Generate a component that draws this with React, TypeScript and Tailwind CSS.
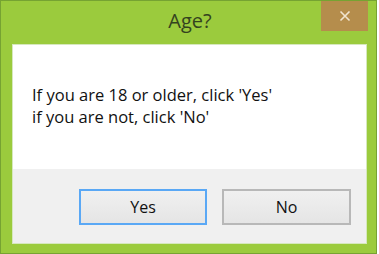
import React from "react";

export default function App() {
  return (
    <div className="w-[379px] h-[254px] bg-white relative overflow-hidden" style={{ fontFamily: '"Open Sans", "Noto Sans", sans-serif' }}>
      <div className="w-[377px] h-[254px] border border-[#76a332] bg-[#9bcb3d] flex flex-col pl-[11px] pr-[10px]">
        <div className="h-[43px] relative flex items-center justify-center">
          <span className="text-[20px] leading-none text-[#34431f] pb-[4px] pl-[2px]">Age?</span>
          <div className="absolute top-0 right-[-2px] w-[47px] h-[30px] bg-[#b58d4c] flex items-center justify-center">
            <svg width="12" height="12" viewBox="0 0 12 12">
              <path d="M1.5 1.5 L10.5 10.5 M10.5 1.5 L1.5 10.5" stroke="#f1e4cf" strokeWidth="1.6" />
            </svg>
          </div>
        </div>
        <div className="border border-[#d6e8bd] flex flex-col w-[355px]">
          <div className="bg-white h-[124px] pl-[19px] pt-[39px] text-[16.5px] leading-[22px] text-[#111111]">
            <div>If you are 18 or older, click 'Yes'</div>
            <div>if you are not, click 'No'</div>
          </div>
          <div className="bg-[#f0f0f0] h-[74px] flex justify-end items-start pt-[20px] pr-[15px] gap-[15px]">
            <button className="w-[128px] h-[36px] border-2 border-[#5aa8f5] bg-gradient-to-b from-[#f0f0f0] to-[#e5e5e5] text-[16px] text-[#111111] flex items-center justify-center">
              Yes
            </button>
            <button className="w-[129px] h-[36px] border-2 border-[#b8b8b8] bg-gradient-to-b from-[#f0f0f0] to-[#e5e5e5] text-[16px] text-[#111111] flex items-center justify-center">
              No
            </button>
          </div>
        </div>
      </div>
    </div>
  );
}
